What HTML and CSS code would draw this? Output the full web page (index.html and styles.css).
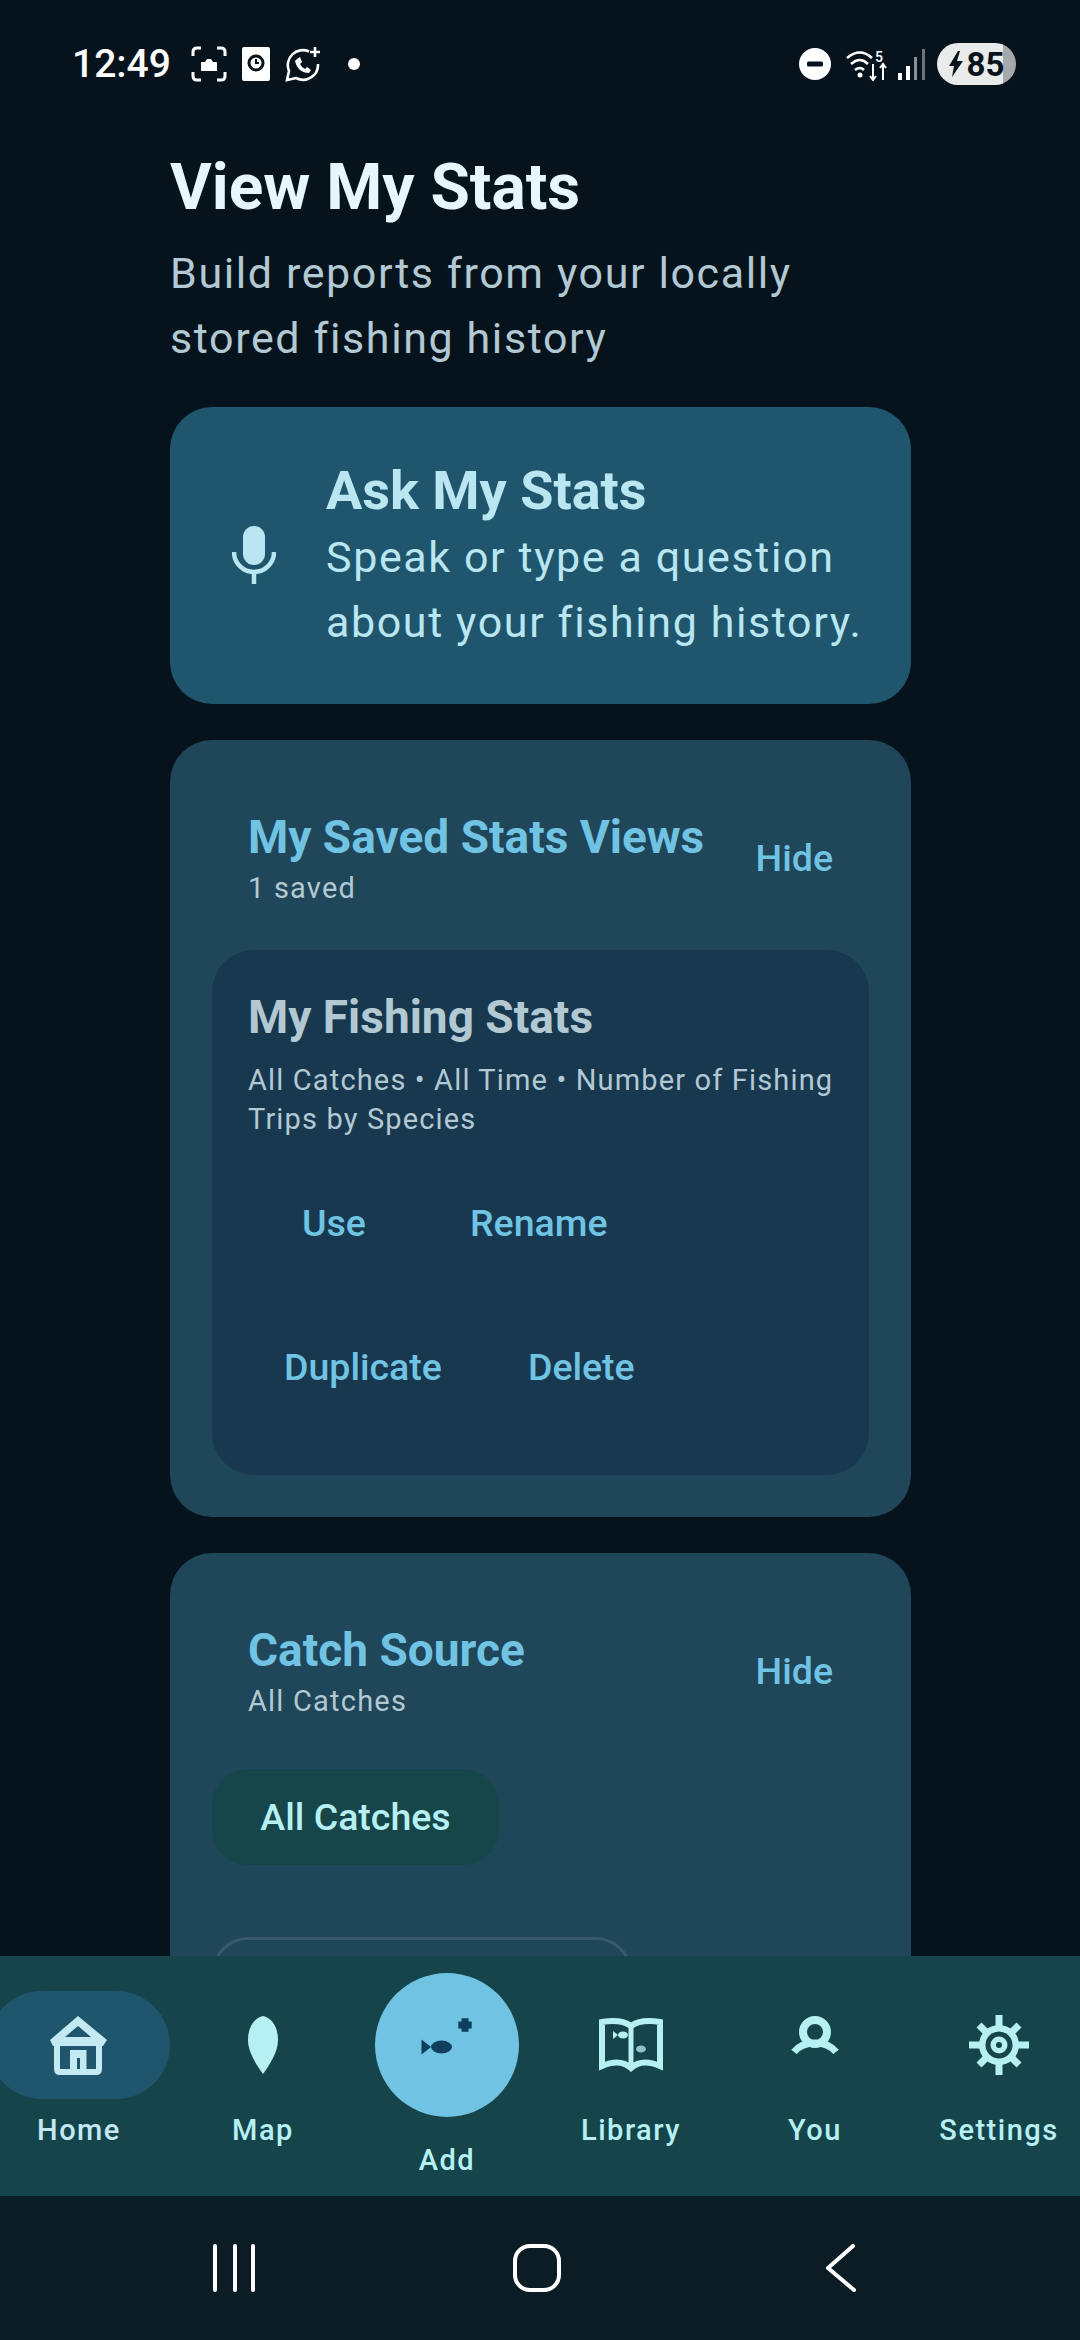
FILE: index.html
```html
<!DOCTYPE html>
<html>

<head>
    <meta charset="utf-8">
    <title>View My Stats</title>
    <link rel="stylesheet" href="styles.css">
</head>

<body>
    <div class="telefone">
        <div class="status">
            <span class="hora">12:49</span>
            <svg class="st-icon" width="36" height="36" viewBox="0 0 36 36" fill="none" stroke="#fff" stroke-width="3">
                <path d="M2 10V6q0-4 4-4h4M26 2h4q4 0 4 4v4M34 26v4q0 4-4 4h-4M10 34H6q-4 0-4-4v-4" />
                <path d="M10 25v-8q0-1 1-1h3l2-3h4l2 3h3q1 0 1 1v8z" fill="#fff" stroke="none" />
            </svg>
            <svg class="st-icon" width="28" height="34" viewBox="0 0 28 34">
                <rect width="28" height="34" rx="2" fill="#fff" />
                <circle cx="14" cy="16" r="7" fill="none" stroke="#06131c" stroke-width="3" />
                <path d="M14 12v4h3" fill="none" stroke="#06131c" stroke-width="2" />
            </svg>
            <svg class="st-icon" width="36" height="36" viewBox="0 0 36 36" fill="none" stroke="#fff" stroke-width="2.6">
                <path d="M24 5.500A15 15 0 0 0 4 25l-2 9 9-2a15 15 0 0 0 22-14" />
                <path d="M12 13l3-2 2 5-2 2q2 4 5 5l2-2 4 3-2 3q-11 0-14-12z" fill="#fff" stroke="none" />
                <path d="M30 1v10M25 6h10" />
            </svg>
            <span class="ponto"></span>
            <span class="status-dir">
                <svg width="32" height="32" viewBox="0 0 32 32">
                    <circle cx="16" cy="16" r="16" fill="#fff" />
                    <rect x="8" y="13.500" width="16" height="5" rx="1.500" fill="#06131c" />
                </svg>
                <svg class="wifi" width="42" height="34" viewBox="0 0 42 34" fill="none" stroke="#fff" stroke-width="2.500">
                    <path d="M1 11q13-11 25 0M5 17q9-8 17 0M9 23q5-4 9 0" />
                    <circle cx="14" cy="28" r="2.500" fill="#fff" stroke="none" />
                    <path d="M27 17v16M24 29l3 4 3-4M37 33V17M34 21l3-4 3 4" stroke-width="2" />
                    <text x="29" y="15" class="wifi-num">5</text>
                </svg>
                <svg class="sinal" width="28" height="32" viewBox="0 0 28 32">
                    <rect x="0" y="25" width="4" height="7" fill="#fff" />
                    <rect x="8" y="18" width="4" height="14" fill="#fff" />
                    <rect x="16" y="9" width="3" height="23" fill="#8b8f93" />
                    <rect x="24" y="1" width="3" height="31" fill="#6d7276" />
                </svg>
                <span class="bateria">
                    <svg width="14" height="26" viewBox="0 0 14 26">
                        <path d="M9 0L0 15h5L3 26l11-16H8l3-10z" fill="#06131c" />
                    </svg>
                    85
                </span>
            </span>
        </div>

        <div class="conteudo">
            <h1 class="titulo">View My Stats</h1>
            <p class="subtitulo">Build reports from your locally stored fishing history</p>

            <div class="ask">
                <svg class="ask-mic" width="44" height="58" viewBox="0 0 44 58" fill="none">
                    <rect x="11" y="0" width="22" height="39" rx="11" fill="#b9e6f0" />
                    <path d="M2 26a20 20 0 0 0 40 0M22 46v12" stroke="#b9e6f0" stroke-width="4.500" />
                </svg>
                <div>
                    <h2 class="ask-titulo">Ask My Stats</h2>
                    <p class="ask-texto">Speak or type a question about your fishing history.</p>
                </div>
            </div>

            <div class="secao">
                <div class="secao-topo">
                    <div>
                        <h2 class="secao-titulo">My Saved Stats Views</h2>
                        <div class="secao-info">1 saved</div>
                    </div>
                    <a class="link">Hide</a>
                </div>
                <div class="salvo">
                    <h3 class="salvo-titulo">My Fishing Stats</h3>
                    <p class="salvo-texto">All Catches • All Time • Number of Fishing Trips by Species</p>
                    <div class="acoes">
                        <a class="link acao acao-curta">Use</a>
                        <a class="link acao">Rename</a>
                        <a class="link acao">Duplicate</a>
                        <a class="link acao">Delete</a>
                    </div>
                </div>
            </div>

            <div class="secao">
                <div class="secao-topo">
                    <div>
                        <h2 class="secao-titulo">Catch Source</h2>
                        <div class="secao-info">All Catches</div>
                    </div>
                    <a class="link">Hide</a>
                </div>
                <div class="chip">All Catches</div>
                <div class="chip-vazio"></div>
            </div>
        </div>

        <div class="nav">
            <div class="nav-item ativo">
                <span class="nav-icone">
                    <svg width="58" height="59" viewBox="0 0 58 59" fill="none">
                        <path d="M28 0L0 24l3 6h50l4-6z" fill="#c3e9f2" />
                        <path d="M28 10L15 21h26z" fill="#1f556d" />
                        <path d="M7 28v25q0 3 3 3h36q3 0 3-3V28" stroke="#c3e9f2" stroke-width="6" />
                        <path d="M20 34h16.500v20H30V42h-3v12h-7z" fill="#c3e9f2" />
                    </svg>
                </span>
                <span class="nav-nome">Home</span>
            </div>
            <div class="nav-item">
                <span class="nav-icone">
                    <svg width="30" height="58" viewBox="0 0 30 58">
                        <path d="M15 0C6 2 0 11 0 24c0 12 8 24 15 34 7-10 15-22 15-34C30 11 24 2 15 0z" fill="#b6f0f2" />
                    </svg>
                </span>
                <span class="nav-nome">Map</span>
            </div>
            <div class="nav-item add">
                <span class="add-circulo">
                    <svg width="144" height="144" viewBox="0 0 144 144" fill="#0f3f5c">
                        <ellipse cx="66.500" cy="74" rx="10.500" ry="6.500" />
                        <path d="M46.500 66.500L56 74l-9.500 7.500z" />
                        <path d="M90 45.300v13.400M83.300 52h13.400" fill="none" stroke="#0f3f5c" stroke-width="7" />
                    </svg>
                </span>
                <span class="nav-nome">Add</span>
            </div>
            <div class="nav-item">
                <span class="nav-icone">
                    <svg width="64" height="54" viewBox="0 0 64 54" fill="none">
                        <path d="M32 8Q22 1 3 4v44q18-8 29 2 11-10 29-2V4Q42 1 32 8z" stroke="#b6f0f2" stroke-width="6" />
                        <path d="M32 8v42" stroke="#b6f0f2" stroke-width="5" />
                        <ellipse cx="24" cy="17" rx="5" ry="3.500" fill="#b6f0f2" />
                        <path d="M14 13l5 4-5 4z" fill="#b6f0f2" />
                        <ellipse cx="42" cy="31" rx="5" ry="3.500" fill="#8ec4c9" />
                    </svg>
                </span>
                <span class="nav-nome">Library</span>
            </div>
            <div class="nav-item">
                <span class="nav-icone">
                    <svg class="icone-you" width="48" height="38" viewBox="0 0 48 38" fill="none">
                        <circle cx="24" cy="16" r="12" stroke="#b6f0f2" stroke-width="8" />
                        <path d="M3 36q7-9 21-9t21 9" stroke="#b6f0f2" stroke-width="7" />
                    </svg>
                </span>
                <span class="nav-nome">You</span>
            </div>
            <div class="nav-item">
                <span class="nav-icone">
                    <svg width="60" height="60" viewBox="0 0 60 60" fill="none">
                        <circle cx="30" cy="30" r="20" fill="#b6f0f2" />
                        <circle cx="30" cy="30" r="13.500" fill="#16444b" />
                        <circle cx="30" cy="30" r="8.500" fill="#b6f0f2" />
                        <circle cx="30" cy="30" r="3" fill="#16444b" />
                        <path d="M30 0v12M30 48v12M0 30h12M48 30h12M10 10l8 8M42 42l8 8M50 10l-8 8M18 42l-8 8" stroke="#b6f0f2" stroke-width="7" />
                    </svg>
                </span>
                <span class="nav-nome">Settings</span>
            </div>
        </div>

        <div class="sistema">
            <svg width="44" height="48" viewBox="0 0 44 48" fill="none" stroke="#fff" stroke-width="4" stroke-linecap="round">
                <path d="M3 2v44M23 2v44M41 2v44" />
            </svg>
            <svg class="sis-casa" width="48" height="48" viewBox="0 0 48 48" fill="none" stroke="#fff" stroke-width="4">
                <rect x="2" y="2" width="44" height="44" rx="15" />
            </svg>
            <svg class="sis-volta" width="32" height="48" viewBox="0 0 32 48" fill="none" stroke="#fff" stroke-width="4" stroke-linecap="round" stroke-linejoin="round">
                <path d="M28 2L3 24l26 22" />
            </svg>
        </div>
    </div>
</body>

</html>
```

FILE: styles.css
```css
* {
    box-sizing: border-box;
}

body {
    margin: 0;
    background-color: #06131c;
    font-family: Roboto, "Liberation Sans", sans-serif;
}

h1,
h2,
h3,
p {
    margin: 0;
}

.telefone {
    display: flex;
    flex-direction: column;
    width: 1080px;
    height: 2340px;
    overflow: hidden;
}

/* barra de status */
.status {
    display: flex;
    flex: none;
    align-items: center;
    height: 130px;
    padding: 0 64px 2px 72px;
    color: #ffffff;
}

.hora {
    margin-right: 20px;
    font-size: 39px;
    font-weight: 500;
}

.st-icon {
    margin-right: 15px;
}

.ponto {
    width: 12px;
    height: 12px;
    margin-left: 12px;
    border-radius: 50%;
    background-color: #ffffff;
}

.status-dir {
    display: flex;
    align-items: center;
    margin-left: auto;
}

.wifi {
    margin-left: 15px;
}

.wifi-num {
    fill: #ffffff;
    stroke: none;
    font-size: 14px;
    font-weight: 500;
}

.sinal {
    margin-left: 10px;
}

.bateria {
    display: flex;
    align-items: center;
    justify-content: center;
    gap: 4px;
    width: 79px;
    height: 42px;
    margin-left: 11px;
    border-radius: 21px;
    background: linear-gradient(90deg, #e9eaea 83%, #a6a8a9 83%);
    color: #06131c;
    font-size: 33px;
    font-weight: 700;
}

/* conteudo */
.conteudo {
    flex: 1;
    min-height: 0;
    overflow: hidden;
    padding-left: 170px;
    padding-right: 169px;
}

.titulo {
    margin-top: 23px;
    color: #e6f6fb;
    font-size: 64px;
    font-weight: 700;
    line-height: 70px;
}

.subtitulo {
    margin-top: 18px;
    width: 680px;
    color: #b2c9d3;
    font-size: 43px;
    letter-spacing: 1.600px;
    line-height: 65px;
}

.ask {
    display: flex;
    align-items: center;
    margin-top: 36px;
    padding: 4px 30px 0 62px;
    height: 297px;
    border-radius: 42px;
    background-color: #1f556d;
    color: #b9e6f0;
}

.ask-mic {
    flex: none;
    margin-right: 50px;
    margin-bottom: 6px;
}

.ask-titulo {
    margin-bottom: 4px;
    font-size: 54px;
    font-weight: 700;
    line-height: 60px;
}

.ask-texto {
    font-size: 43px;
    letter-spacing: 1.600px;
    line-height: 65px;
}

.secao {
    margin-top: 36px;
    padding: 42px 42px 42px;
    border-radius: 42px;
    background-color: #1f4659;
}

.secao-topo {
    display: flex;
    align-items: center;
    justify-content: space-between;
    padding: 28px 36px 0;
}

.secao-titulo {
    color: #70c3e2;
    font-size: 46px;
    font-weight: 700;
    line-height: 54px;
}

.secao-info {
    margin-top: 6px;
    color: #b2c9d3;
    font-size: 29px;
    letter-spacing: 1.200px;
    line-height: 36px;
}

.link {
    color: #70c3e2;
    font-size: 37.500px;
    font-weight: 500;
}

.salvo {
    margin-top: 44px;
    padding: 40px 28px 60px 36px;
    border-radius: 42px;
    background-color: #17384e;
}

.salvo-titulo {
    color: #b2c9d3;
    font-size: 46px;
    font-weight: 700;
    line-height: 54px;
}

.salvo-texto {
    margin-top: 17px;
    color: #b2c9d3;
    font-size: 29px;
    letter-spacing: 1.150px;
    line-height: 39px;
}

.acoes {
    display: flex;
    flex-wrap: wrap;
    gap: 48px 14px;
    margin-top: 36px;
}

.acao {
    display: flex;
    align-items: center;
    justify-content: center;
    height: 96px;
    padding: 0 36px;
}

.acao-curta {
    min-width: 172px;
}

.chip {
    display: flex;
    align-items: center;
    justify-content: center;
    width: 287px;
    height: 96px;
    margin-top: 50px;
    border-radius: 36px;
    background-color: #16454a;
    color: #b6f0f2;
    font-size: 37.500px;
    font-weight: 500;
}

.chip-vazio {
    width: 420px;
    height: 96px;
    margin-top: 72px;
    border: 3px solid #3a5a6b;
    border-radius: 36px;
}

/* navegacao */
.nav {
    display: flex;
    flex: none;
    height: 240px;
    margin-left: -13px;
    width: 1106px;
    background-color: #16444b;
}

.nav-item {
    display: flex;
    flex: 0 0 184px;
    flex-direction: column;
    align-items: center;
    padding-top: 35px;
    color: #b6f0f2;
}

.nav-icone {
    display: flex;
    align-items: center;
    justify-content: center;
    width: 182px;
    height: 108px;
    border-radius: 54px;
}

.icone-you {
    margin-bottom: 20px;
}

.ativo .nav-icone {
    background-color: #1f556d;
}

.nav-nome {
    margin-top: 13px;
    font-size: 29px;
    font-weight: 500;
    letter-spacing: 1.500px;
    line-height: 36px;
}

.ativo .nav-nome {
    color: #c3e9f2;
}

.add {
    padding-top: 17px;
}

.add-circulo {
    display: flex;
    align-items: center;
    justify-content: center;
    width: 144px;
    height: 144px;
    border-radius: 50%;
    background-color: #70c3e2;
}

.add .nav-nome {
    margin-top: 25px;
}

/* barra do sistema */
.sistema {
    display: flex;
    flex: none;
    align-items: center;
    height: 144px;
    padding-left: 212px;
    background-color: #0b1c24;
}

.sis-casa {
    margin-left: 257px;
}

.sis-volta {
    margin-left: 264px;
}
```
